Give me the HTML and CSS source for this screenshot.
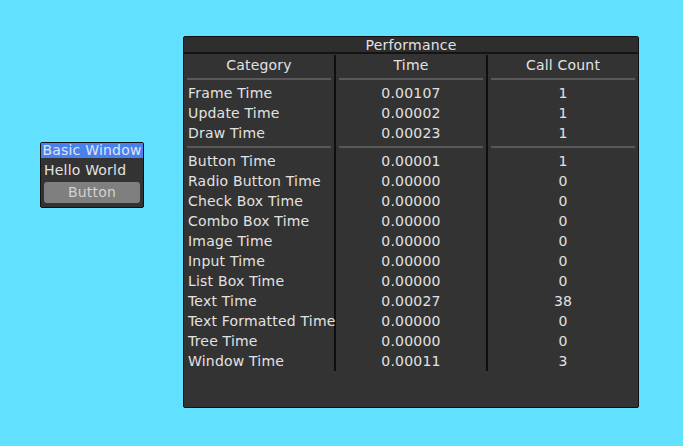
FILE: index.html
```html
<!DOCTYPE html>
<html>
<head>
<meta charset="utf-8">
<link rel="stylesheet" href="styles.css">
</head>
<body>
<div class="desktop">
  <div class="window basic">
    <div class="titlebar active">Basic Window</div>
    <div class="basic-body">
      <div class="label">Hello World</div>
      <div class="button">Button</div>
    </div>
  </div>

  <div class="window perf">
    <div class="titlebar">Performance</div>
    <div class="divider"></div>
    <div class="table">
      <div class="col left">
        <div class="cell">Category</div>
        <div class="sep"></div>
        <div class="cell">Frame Time</div>
        <div class="cell">Update Time</div>
        <div class="cell">Draw Time</div>
        <div class="sep"></div>
        <div class="cell">Button Time</div>
        <div class="cell">Radio Button Time</div>
        <div class="cell">Check Box Time</div>
        <div class="cell">Combo Box Time</div>
        <div class="cell">Image Time</div>
        <div class="cell">Input Time</div>
        <div class="cell">List Box Time</div>
        <div class="cell">Text Time</div>
        <div class="cell">Text Formatted Time</div>
        <div class="cell">Tree Time</div>
        <div class="cell">Window Time</div>
      </div>
      <div class="col mid">
        <div class="cell">Time</div>
        <div class="sep"></div>
        <div class="cell">0.00107</div>
        <div class="cell">0.00002</div>
        <div class="cell">0.00023</div>
        <div class="sep"></div>
        <div class="cell">0.00001</div>
        <div class="cell">0.00000</div>
        <div class="cell">0.00000</div>
        <div class="cell">0.00000</div>
        <div class="cell">0.00000</div>
        <div class="cell">0.00000</div>
        <div class="cell">0.00000</div>
        <div class="cell">0.00027</div>
        <div class="cell">0.00000</div>
        <div class="cell">0.00000</div>
        <div class="cell">0.00011</div>
      </div>
      <div class="col right">
        <div class="cell">Call Count</div>
        <div class="sep"></div>
        <div class="cell">1</div>
        <div class="cell">1</div>
        <div class="cell">1</div>
        <div class="sep"></div>
        <div class="cell">1</div>
        <div class="cell">0</div>
        <div class="cell">0</div>
        <div class="cell">0</div>
        <div class="cell">0</div>
        <div class="cell">0</div>
        <div class="cell">0</div>
        <div class="cell">38</div>
        <div class="cell">0</div>
        <div class="cell">0</div>
        <div class="cell">3</div>
      </div>
    </div>
  </div>
</div>
</body>
</html>
```
FILE: styles.css
```css
html, body {
  margin: 0;
  padding: 0;
}
body {
  background: #62e0ff;
  font-family: "DejaVu Sans", "Liberation Sans", sans-serif;
  font-size: 14px;
  letter-spacing: 0.2px;
  color: #e2e2e2;
}
.desktop {
  position: relative;
  width: 683px;
  height: 446px;
  overflow: hidden;
}
.window {
  position: absolute;
  box-sizing: border-box;
  background: #333333;
  border: 1px solid #111111;
  border-radius: 2px;
  display: flex;
  flex-direction: column;
}
.titlebar {
  height: 15px;
  line-height: 17px;
  text-align: center;
  background: #2e2e2e;
  white-space: nowrap;
  overflow: hidden;
}
.titlebar.active {
  background: #4a80ee;
  color: #dfe6f5;
  line-height: 15px;
}
.divider {
  height: 2px;
  background: #141414;
}
.basic {
  left: 40px;
  top: 142px;
  width: 104px;
  height: 66px;
}
.basic-body {
  display: flex;
  flex-direction: column;
  padding: 2px 3px 0 3px;
}
.label {
  height: 20px;
  line-height: 20px;
  white-space: nowrap;
}
.button {
  margin-top: 2px;
  height: 21px;
  line-height: 21px;
  border-radius: 3px;
  background: #7f7f7f;
  color: #d2d2d2;
  text-align: center;
}
.perf {
  left: 183px;
  top: 36px;
  width: 456px;
  height: 372px;
}
.table {
  display: grid;
  grid-template-columns: 152px 152px 150px;
  padding-top: 1px;
}
.col {
  display: flex;
  flex-direction: column;
  box-sizing: border-box;
}
.col.left, .col.mid {
  border-right: 2px solid #0e0e0e;
}
.cell {
  height: 20px;
  line-height: 20px;
  white-space: nowrap;
  overflow: visible;
}
.left .cell {
  padding-left: 4px;
}
.left .cell:first-child {
  padding-left: 0;
  text-align: center;
}
.mid .cell, .right .cell {
  text-align: center;
}
.sep {
  height: 2px;
  margin: 3px 3px;
  background: #595959;
}
```
